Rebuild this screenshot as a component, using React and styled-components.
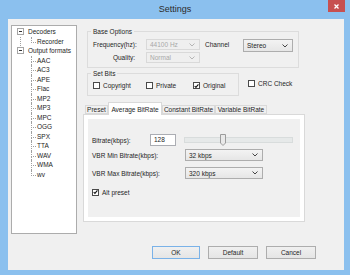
import React from "react";
import styled, { createGlobalStyle } from "styled-components";

const GlobalStyle = createGlobalStyle`
  html, body {
    margin: 0;
    padding: 0;
  }
  body {
    background: #8bc0ee;
    font-family: "Liberation Sans", Arial, sans-serif;
    font-size: 6.5px;
    color: #1e1e1e;
  }
  * {
    box-sizing: border-box;
  }
`;

const Chevron = ({ color = "#444" }) => (
  <svg width="6" height="4" viewBox="0 0 6 4">
    <polyline points="0.5,0.5 3,3 5.5,0.5" fill="none" stroke={color} strokeWidth="1" />
  </svg>
);

const CheckMark = () => (
  <svg width="6" height="6" viewBox="0 0 6 6">
    <polyline points="0.8,3 2.3,4.6 5.3,1" fill="none" stroke="#111" strokeWidth="1.3" />
  </svg>
);

const Checkbox = ({ checked, label, width }) => (
  <CheckItem $width={width}>
    <CheckBoxSquare>{checked && <CheckMark />}</CheckBoxSquare>
    <span>{label}</span>
  </CheckItem>
);

const Select = ({ value, width, height, disabled }) => (
  <SelectBox $width={width} $height={height} $disabled={disabled}>
    <span>{value}</span>
    <Chevron color={disabled ? "#b5b5b5" : "#444"} />
  </SelectBox>
);

const outputFormats = ["AAC", "AC3", "APE", "Flac", "MP2", "MP3", "MPC", "OGG", "SPX", "TTA", "WAV", "WMA", "wv"];

const App = () => {
  const bitrate = 128;
  const thumbLeft = Math.round((bitrate / 384) * 109);

  return (
    <>
      <GlobalStyle />
      <Window>
        <TitleBar>
          <TitleSpacer />
          <Title>Settings</Title>
          <CloseButton>
            <svg width="5" height="5" viewBox="0 0 5 5">
              <path d="M0.5 0.5 L4.5 4.5 M4.5 0.5 L0.5 4.5" stroke="#fff" strokeWidth="1.3" />
            </svg>
          </CloseButton>
        </TitleBar>

        <Client>
          <Body>
            <TreeBox>
              <NodeRow>
                <Toggle />
                <span>Decoders</span>
              </NodeRow>
              <Children $connect>
                <Leaf $last>Recorder</Leaf>
              </Children>
              <NodeRow>
                <Toggle />
                <span>Output formats</span>
              </NodeRow>
              <Children>
                {outputFormats.map((f, i) => (
                  <Leaf key={f} $last={i === outputFormats.length - 1}>
                    {f}
                  </Leaf>
                ))}
              </Children>
            </TreeBox>

            <RightCol>
              <Group $width={212} $top={2}>
                <Legend>Base Options</Legend>
                <BaseContent>
                  <LabelGrid>
                    <GridLabel>Frequency(hz):</GridLabel>
                    <Select value="44100 Hz" width={54} height={11} disabled />
                    <GridLabel>Quality:</GridLabel>
                    <Select value="Normal" width={54} height={11} disabled />
                  </LabelGrid>
                  <ChannelLabel>Channel</ChannelLabel>
                  <Select value="Stereo" width={50} height={13} />
                </BaseContent>
              </Group>

              <BitsRow>
                <Group $width={152} $top={0} $bottom={5}>
                  <Legend>Set Bits</Legend>
                  <BitsContent>
                    <Checkbox label="Copyright" width={53} />
                    <Checkbox label="Private" width={47} />
                    <Checkbox label="Original" checked />
                  </BitsContent>
                </Group>
                <CrcWrap>
                  <Checkbox label="CRC Check" />
                </CrcWrap>
              </BitsRow>

              <TabStrip>
                <Tab $width={23}>Preset</Tab>
                <Tab $width={54} $active>
                  Average BitRate
                </Tab>
                <Tab $width={53}>Constant BitRate</Tab>
                <Tab $width={52}>Variable BitRate</Tab>
              </TabStrip>
              <TabPanel>
                <PanelInner>
                  <FormRow>
                    <FieldLabel $width={58}>Bitrate(kbps):</FieldLabel>
                    <TextInput>{bitrate}</TextInput>
                    <Slider>
                      <Track />
                      <Thumb style={{ left: thumbLeft }}>
                        <svg width="6" height="12" viewBox="0 0 6 12">
                          <path d="M0.5 0.5 H5.5 V9 L3 11.5 L0.5 9 Z" fill="#e9e9e9" stroke="#9c9c9c" />
                        </svg>
                      </Thumb>
                    </Slider>
                  </FormRow>
                  <FormRow $gap={3}>
                    <FieldLabel $width={93}>VBR Min Bitrate(kbps):</FieldLabel>
                    <Select value="32 kbps" width={78} height={12} />
                  </FormRow>
                  <FormRow $gap={6}>
                    <FieldLabel $width={93}>VBR Max Bitrate(kbps):</FieldLabel>
                    <Select value="320 kbps" width={78} height={12} />
                  </FormRow>
                  <FormRow $gap={7}>
                    <Checkbox label="Alt preset" checked />
                  </FormRow>
                </PanelInner>
              </TabPanel>
            </RightCol>
          </Body>

          <ButtonRow>
            <Button $width={48} $default>
              OK
            </Button>
            <Button $width={50}>Default</Button>
            <Button $width={50}>Cancel</Button>
          </ButtonRow>
        </Client>
      </Window>
    </>
  );
};

export default App;

const Window = styled.div`
  width: 350px;
  height: 275px;
  display: flex;
  flex-direction: column;
  background: #8bc0ee;
`;

const TitleBar = styled.div`
  height: 19px;
  display: flex;
  align-items: flex-start;
`;

const TitleSpacer = styled.div`
  width: 22px;
`;

const Title = styled.div`
  flex: 1;
  text-align: center;
  font-size: 9px;
  line-height: 18px;
  color: #2b2b2b;
`;

const CloseButton = styled.div`
  width: 17px;
  height: 12px;
  margin-right: 5px;
  background: #c75050;
  display: flex;
  align-items: center;
  justify-content: center;
`;

const Client = styled.div`
  flex: 1;
  margin: 0 6px 5px 8px;
  background: #f0f0f0;
  display: flex;
  flex-direction: column;
`;

const Body = styled.div`
  display: flex;
  gap: 6px;
  padding: 6px 0 0 3px;
`;

const TreeBox = styled.div`
  width: 66px;
  height: 209px;
  border: 1px solid #acacac;
  background: #fff;
  padding: 1px 0 0 5px;
  line-height: 9.5px;
`;

const NodeRow = styled.div`
  height: 9.5px;
  display: flex;
  align-items: center;
  gap: 4px;
`;

const Toggle = styled.span`
  width: 7px;
  height: 7px;
  border: 1px solid #a5a5a5;
  background: #fff;
  display: flex;
  align-items: center;
  justify-content: center;

  &::after {
    content: "";
    width: 3px;
    height: 1px;
    background: #333;
  }
`;

const Children = styled.div`
  margin-left: 3px;
  border-left: 1px dotted ${(p) => (p.$connect ? "#a0a0a0" : "transparent")};
  padding-left: 10px;
`;

const Leaf = styled.div`
  position: relative;
  height: 9.5px;
  padding-left: 6px;

  &::before {
    content: "";
    position: absolute;
    left: 0;
    top: 0;
    width: 4px;
    height: 5px;
    border-left: 1px dotted #a0a0a0;
    border-bottom: 1px dotted #a0a0a0;
  }

  &::after {
    content: "";
    position: absolute;
    left: 0;
    top: 5px;
    bottom: 0;
    border-left: 1px dotted ${(p) => (p.$last ? "transparent" : "#a0a0a0")};
  }
`;

const RightCol = styled.div`
  width: 222px;
  display: flex;
  flex-direction: column;
`;

const Group = styled.fieldset`
  margin: ${(p) => p.$top}px 0 0 4px;
  padding: 3px 0 ${(p) => (p.$bottom != null ? p.$bottom : 4)}px 5px;
  width: ${(p) => p.$width}px;
  min-inline-size: 0;
  border: 1px solid #dcdcdc;
`;

const Legend = styled.legend`
  margin-left: -2px;
  padding: 0 2px;
  line-height: 9px;
  font-size: 6.5px;
`;

const BaseContent = styled.div`
  display: flex;
  align-items: flex-start;
`;

const LabelGrid = styled.div`
  display: grid;
  grid-template-columns: 42px 54px;
  grid-auto-rows: 11px;
  column-gap: 11px;
  row-gap: 2px;
`;

const GridLabel = styled.span`
  text-align: right;
  line-height: 11px;
`;

const ChannelLabel = styled.span`
  width: 38px;
  margin-left: 5px;
  line-height: 11px;
`;

const SelectBox = styled.div`
  width: ${(p) => p.$width}px;
  height: ${(p) => p.$height}px;
  display: flex;
  align-items: center;
  justify-content: space-between;
  padding: 0 4px 0 3px;
  border: 1px solid ${(p) => (p.$disabled ? "#d9d9d9" : "#adadad")};
  background: ${(p) => (p.$disabled ? "#efefef" : "linear-gradient(#f3f3f3, #e6e6e6)")};
  color: ${(p) => (p.$disabled ? "#a8a8a8" : "#1e1e1e")};
`;

const BitsRow = styled.div`
  display: flex;
  align-items: flex-start;
  margin-top: 1px;
`;

const BitsContent = styled.div`
  display: flex;
  align-items: center;
  height: 9px;
`;

const CheckItem = styled.div`
  display: flex;
  align-items: center;
  gap: 3px;
  ${(p) => (p.$width ? `width: ${p.$width}px;` : "")}
`;

const CheckBoxSquare = styled.span`
  width: 7px;
  height: 7px;
  border: 1px solid #4a4a4a;
  background: #fff;
  display: flex;
  align-items: center;
  justify-content: center;
`;

const CrcWrap = styled.div`
  margin: 11px 0 0 9px;
`;

const TabStrip = styled.div`
  position: relative;
  z-index: 1;
  display: flex;
  align-items: flex-end;
  height: 12px;
  margin-top: 6px;
  padding-left: 2px;
`;

const Tab = styled.div`
  width: ${(p) => p.$width}px;
  height: ${(p) => (p.$active ? 13 : 9)}px;
  margin-bottom: ${(p) => (p.$active ? -1 : 0)}px;
  border: 1px solid #d9d9d9;
  border-bottom: ${(p) => (p.$active ? "none" : "1px solid #d9d9d9")};
  background: ${(p) => (p.$active ? "#fff" : "#f0f0f0")};
  display: flex;
  align-items: center;
  justify-content: center;
  white-space: nowrap;
`;

const TabPanel = styled.div`
  width: 222px;
  height: 108px;
  border: 1px solid #d9d9d9;
  background: #fff;
  padding: 4px;
`;

const PanelInner = styled.div`
  height: 100%;
  background: #f0f0f0;
  padding: 15px 0 0 4px;
  display: flex;
  flex-direction: column;
`;

const FormRow = styled.div`
  display: flex;
  align-items: center;
  height: 12px;
  margin-top: ${(p) => p.$gap || 0}px;
`;

const FieldLabel = styled.span`
  width: ${(p) => p.$width}px;
  white-space: nowrap;
`;

const TextInput = styled.div`
  width: 26px;
  height: 12px;
  border: 1px solid #abadb3;
  background: #fff;
  padding-left: 3px;
  line-height: 10px;
`;

const Slider = styled.div`
  position: relative;
  width: 109px;
  height: 12px;
  margin-left: 8px;
  display: flex;
  align-items: center;
`;

const Track = styled.div`
  width: 100%;
  height: 6px;
  background: #e6e9e9;
  border: 1px solid #d8dcdc;
`;

const Thumb = styled.div`
  position: absolute;
  top: 0;
  width: 6px;
  height: 12px;
  display: flex;
`;

const ButtonRow = styled.div`
  display: flex;
  justify-content: flex-end;
  gap: 8px;
  margin-top: 12px;
  padding-right: 28px;
`;

const Button = styled.div`
  width: ${(p) => p.$width}px;
  height: 13px;
  border: 1px solid ${(p) => (p.$default ? "#7ab2e8" : "#adadad")};
  background: linear-gradient(#f0f0f0, #e5e5e5);
  display: flex;
  align-items: center;
  justify-content: center;
`;
